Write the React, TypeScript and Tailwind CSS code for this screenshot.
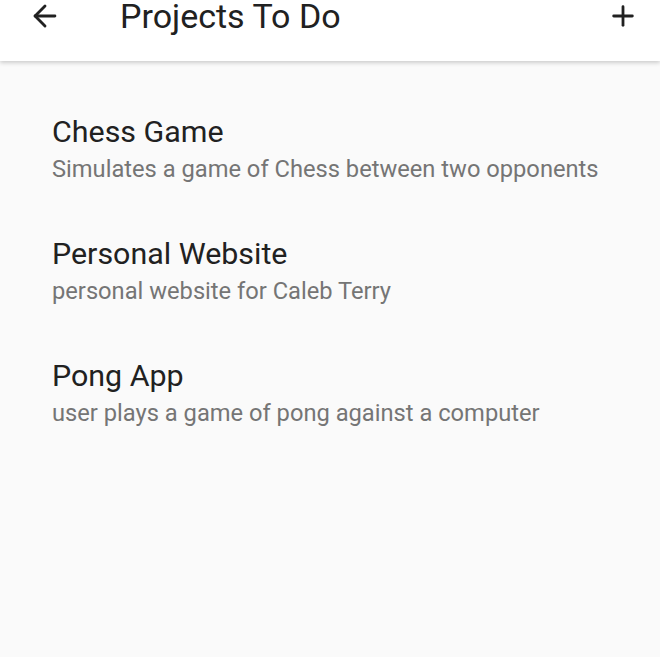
import { ArrowLeft, Plus } from "lucide-react";

const projects = [
  { title: "Chess Game", desc: "Simulates a game of Chess between two opponents" },
  { title: "Personal Website", desc: "personal website for Caleb Terry" },
  { title: "Pong App", desc: "user plays a game of pong against a computer" },
];

export default function App() {
  return (
    <div className="h-[657px] w-[660px] overflow-hidden bg-[#fafafa] font-['Roboto',sans-serif]">
      <div className="relative z-10 h-[61px] bg-white shadow-[0_2px_4px_rgba(0,0,0,0.18)]">
        <div className="flex h-[31px] items-center pl-[28px] pr-[21px]">
          <ArrowLeft size={34} strokeWidth={2} className="text-[#212121]" />
          <h1 className="ml-[58px] flex-1 text-[34px] leading-[34px] text-[#212121]">Projects To Do</h1>
          <Plus size={32} strokeWidth={2.1} className="text-[#212121]" />
        </div>
      </div>
      <div className="pt-[51px]">
        {projects.map((p) => (
          <div key={p.title} className="flex h-[122px] flex-col px-[52px]">
            <div className="text-[30.4px] leading-[40px] text-[#212121]">{p.title}</div>
            <div className="text-[23.7px] leading-[34px] text-[#757575]">{p.desc}</div>
          </div>
        ))}
      </div>
    </div>
  );
}
